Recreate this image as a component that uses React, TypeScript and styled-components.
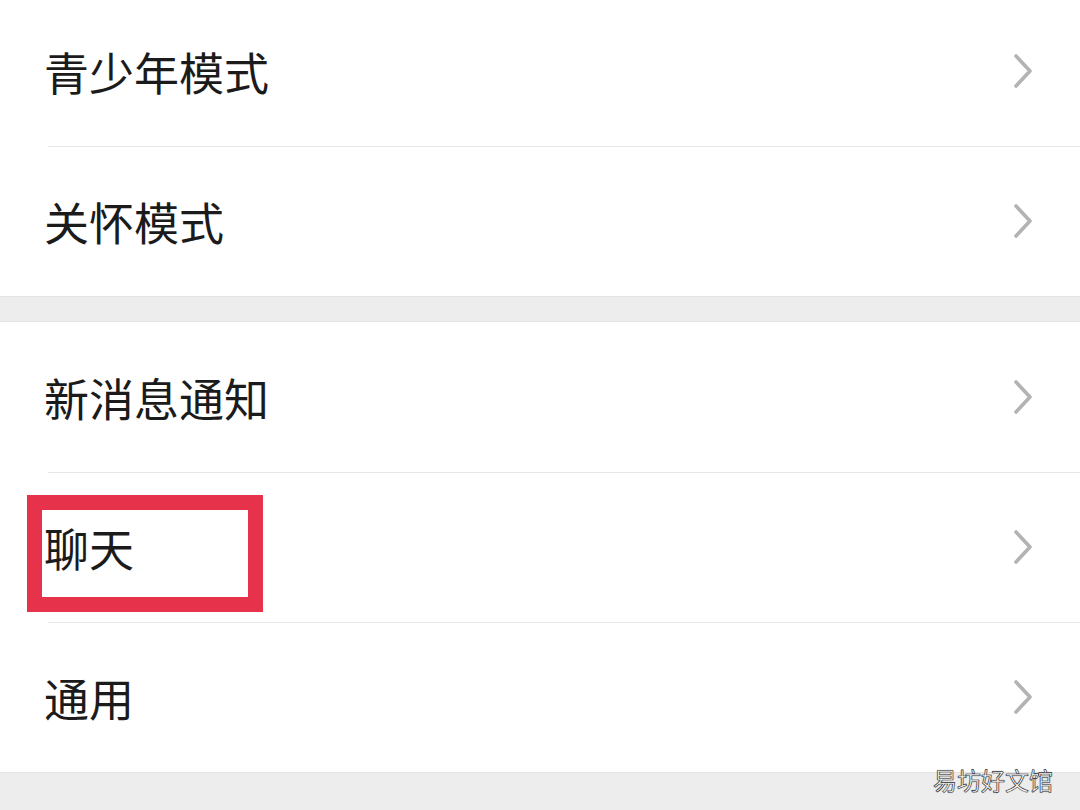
import styled, { createGlobalStyle } from 'styled-components'

const GlobalStyle = createGlobalStyle`
  html, body {
    margin: 0;
    padding: 0;
    background: #ededed;
    overflow: hidden;
  }
  body {
    font-family: "Noto Sans CJK SC", "Noto Sans", sans-serif;
  }
`

const Page = styled.div`
  position: relative;
  width: 1080px;
  height: 810px;
  background: #ededed;
  overflow: hidden;
`

const Group = styled.div<{ shift?: number }>`
  background: #fff;
  margin-top: ${props => props.shift || 0}px;
  border-top: 1px solid #e3e3e3;
  border-bottom: 1px solid #e3e3e3;
`

const Row = styled.div<{ first?: boolean }>`
  position: relative;
  height: 150px;
  display: flex;
  align-items: center;
  justify-content: space-between;
  padding: 0 46px 0 44px;
  box-sizing: border-box;

  &::before {
    content: '';
    display: ${props => props.first ? 'none' : 'block'};
    position: absolute;
    top: 0;
    left: 48px;
    right: 0;
    height: 1px;
    background: #e6e6e6;
  }
`

const Label = styled.span`
  font-size: 45px;
  line-height: 1;
  color: #1b1b1b;
  letter-spacing: 0;
`

const Chevron = () => (
  <svg width="22" height="36" viewBox="0 0 22 36">
    <polyline points="4,3 18,18 4,33" fill="none" stroke="#b3b3b3" strokeWidth="3.6" strokeLinecap="round" strokeLinejoin="round" />
  </svg>
)

const Highlight = styled.div`
  position: absolute;
  left: 27px;
  top: 23px;
  width: 236px;
  height: 117px;
  box-sizing: border-box;
  border: 15px solid #e6334b;
  pointer-events: none;
`

const Watermark = styled.div`
  position: absolute;
  right: 27px;
  bottom: 18px;
  font-size: 24px;
  line-height: 1;
  color: #fff;
  -webkit-text-stroke: 0.6px #333;
  text-shadow: 0 0 1px #444;
`

const groups = [
  ['青少年模式', '关怀模式'],
  ['新消息通知', '聊天', '通用'],
]

export default function App() {
  return (
    <>
      <GlobalStyle />
      <Page>
        {groups.map((items, gi) => (
          <Group key={gi} shift={gi === 0 ? -5 : 24}>
            {items.map((label, i) => (
              <Row key={label} first={i === 0}>
                {label === '聊天' && <Highlight />}
                <Label>{label}</Label>
                <Chevron />
              </Row>
            ))}
          </Group>
        ))}
        <Watermark>易坊好文馆</Watermark>
      </Page>
    </>
  )
}
